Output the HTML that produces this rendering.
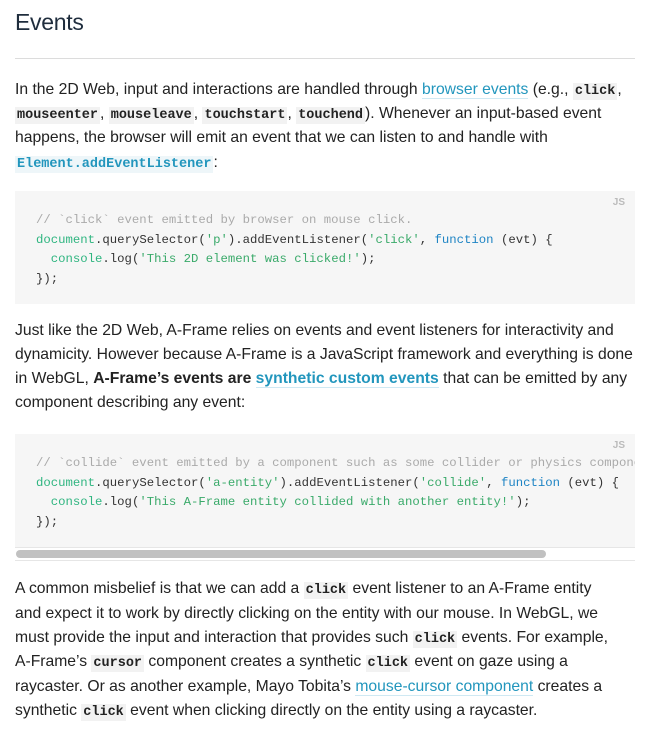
<!DOCTYPE html>
<html><head><meta charset="utf-8"><style>
body{margin:0;width:653px;height:735px;background:#fff;overflow:hidden;font-family:"Liberation Sans",sans-serif;color:#222;position:relative}
.l{position:absolute;left:15px;white-space:nowrap;font-size:15.7px;letter-spacing:0;line-height:20px}
a{color:#2296bd;text-decoration:none;border-bottom:1px solid #cfe9f3}
code{font-family:"Liberation Mono",monospace;font-weight:bold;font-size:13.5px;background:#f2f2f2;padding:1px 2px;letter-spacing:0}
a code{color:#2296bd;background:#eef6f9}
h1{position:absolute;left:15px;top:9px;margin:0;font-weight:normal;font-size:23px;color:#1f2d3d;letter-spacing:-0.3px}
.hr{position:absolute;left:15px;top:58px;width:620px;height:1px;background:#dcdcdc}
.pre{position:absolute;left:15px;width:620px;background:#f6f6f6;overflow:hidden}
.pre .c{position:absolute;left:21px;white-space:pre;font-family:"Liberation Mono",monospace;font-size:12.3px;line-height:19.5px;color:#333}
.js{position:absolute;right:10px;top:6px;font-size:10px;color:#bbb;font-weight:bold}
.cm{color:#aaa}.g{color:#2fb580}.s{color:#3aaa6a}.k{color:#1e84c4}
</style></head><body>
<h1>Events</h1>
<div class="hr"></div>
<div class="l" style="top:80px">In the 2D Web, input and interactions are handled through <a>browser events</a> (e.g., <code>click</code>,</div>
<div class="l" style="top:104px"><code>mouseenter</code>, <code>mouseleave</code>, <code>touchstart</code>, <code>touchend</code>). Whenever an input-based event</div>
<div class="l" style="top:128px">happens, the browser will emit an event that we can listen to and handle with</div>
<div class="l" style="top:153px"><a><code>Element.addEventListener</code></a>:</div>

<div class="pre" style="top:191px;height:113px"><span class="js">JS</span>
<div class="c" style="top:20px"><span class="cm">// `click` event emitted by browser on mouse click.</span>
<span class="g">document</span>.querySelector(<span class="s">'p'</span>).addEventListener(<span class="s">'click'</span>, <span class="k">function</span> (evt) {
  <span class="g">console</span>.log(<span class="s">'This 2D element was clicked!'</span>);
});</div></div>

<div class="l" style="top:321px">Just like the 2D Web, A-Frame relies on events and event listeners for interactivity and</div>
<div class="l" style="top:345px">dynamicity. However because A-Frame is a JavaScript framework and everything is done</div>
<div class="l" style="top:369px">in WebGL, <b>A-Frame’s events are <a>synthetic custom events</a></b> that can be emitted by any</div>
<div class="l" style="top:393px">component describing any event:</div>

<div class="pre" style="top:434px;height:113px;border-bottom:1px solid #e6e6e6"><span class="js">JS</span>
<div class="c" style="top:20px"><span class="cm">// `collide` event emitted by a component such as some collider or physics component.</span>
<span class="g">document</span>.querySelector(<span class="s">'a-entity'</span>).addEventListener(<span class="s">'collide'</span>, <span class="k">function</span> (evt) {
  <span class="g">console</span>.log(<span class="s">'This A-Frame entity collided with another entity!'</span>);
});</div></div>
<div style="position:absolute;left:15px;top:548px;width:620px;height:12px;background:#fff;border-bottom:1px solid #e6e6e6"></div>
<div style="position:absolute;left:16px;top:550px;width:530px;height:8px;border-radius:4px;background:#c1c1c1"></div>

<div class="l" style="top:579px">A common misbelief is that we can add a <code>click</code> event listener to an A-Frame entity</div>
<div class="l" style="top:604px">and expect it to work by directly clicking on the entity with our mouse. In WebGL, we</div>
<div class="l" style="top:628px">must provide the input and interaction that provides such <code>click</code> events. For example,</div>
<div class="l" style="top:652px">A-Frame’s <code>cursor</code> component creates a synthetic <code>click</code> event on gaze using a</div>
<div class="l" style="top:677px">raycaster. Or as another example, Mayo Tobita’s <a>mouse-cursor component</a> creates a</div>
<div class="l" style="top:701px">synthetic <code>click</code> event when clicking directly on the entity using a raycaster.</div>
</body></html>
